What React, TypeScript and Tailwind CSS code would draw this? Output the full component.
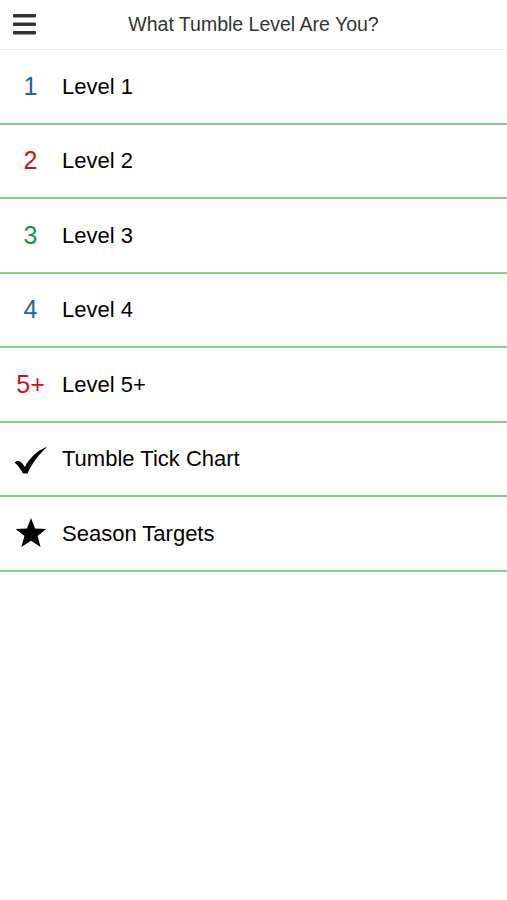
const rows = [
  { mark: "1", color: "text-[#1c64a8]", label: "Level 1" },
  { mark: "2", color: "text-[#d2101c]", label: "Level 2" },
  { mark: "3", color: "text-[#16944c]", label: "Level 3" },
  { mark: "4", color: "text-[#1c64a8]", label: "Level 4" },
  { mark: "5+", color: "text-[#d2101c]", label: "Level 5+" },
  { mark: "tick", color: "text-black", label: "Tumble Tick Chart" },
  { mark: "star", color: "text-black", label: "Season Targets" },
];

const Mark = ({ mark, color }: { mark: string; color: string }) => {
  if (mark === "tick") {
    return (
      <svg width="34" height="28" viewBox="0 0 34 28" className="mt-[2px]">
        <path
          d="M0.5 16.5 C3.5 13.5 7 15 9.5 19 L10.8 21 C16 11.5 23 4.5 33.5 0.5 C25.5 8 18.5 16 13.5 27.5 L9 27.5 C6.5 23 4 19.5 0.5 16.5 Z"
          fill="black"
        />
      </svg>
    );
  }
  if (mark === "star") {
    return (
      <svg width="34" height="32" viewBox="0 0 24 23">
        <path
          d="M12 0.8 L14.9 8.3 L23 8.6 L16.7 13.7 L18.9 21.6 L12 17.1 L5.1 21.6 L7.3 13.7 L1 8.6 L9.1 8.3 Z"
          fill="black"
        />
      </svg>
    );
  }
  return <span className={`text-[25px] ${color}`}>{mark}</span>;
};

export default function App() {
  return (
    <div className="min-h-screen bg-white font-['Liberation_Sans',Arial,sans-serif]">
      <header className="h-[50px] flex items-center border-b border-[#e8e8e8] relative">
        <div className="pl-[13px]">
          <svg width="23" height="21" viewBox="0 0 23 21" className="block">
            <rect x="0" y="0" width="23" height="3.6" rx="1" fill="#333" />
            <rect x="0" y="8.5" width="23" height="3.6" rx="1" fill="#333" />
            <rect x="0" y="17" width="23" height="3.6" rx="1" fill="#333" />
          </svg>
        </div>
        <h1 className="absolute inset-x-0 text-center text-[19.5px] text-[#333] pointer-events-none">
          What Tumble Level Are You?
        </h1>
      </header>
      <ul>
        {rows.map((row) => (
          <li
            key={row.label}
            className="h-[74.5px] flex items-center border-b-2 border-[#7fd18c]"
          >
            <div className="w-[62px] flex justify-center pr-[1px]">
              <Mark mark={row.mark} color={row.color} />
            </div>
            <span className="text-[22px] text-black">{row.label}</span>
          </li>
        ))}
      </ul>
    </div>
  );
}
